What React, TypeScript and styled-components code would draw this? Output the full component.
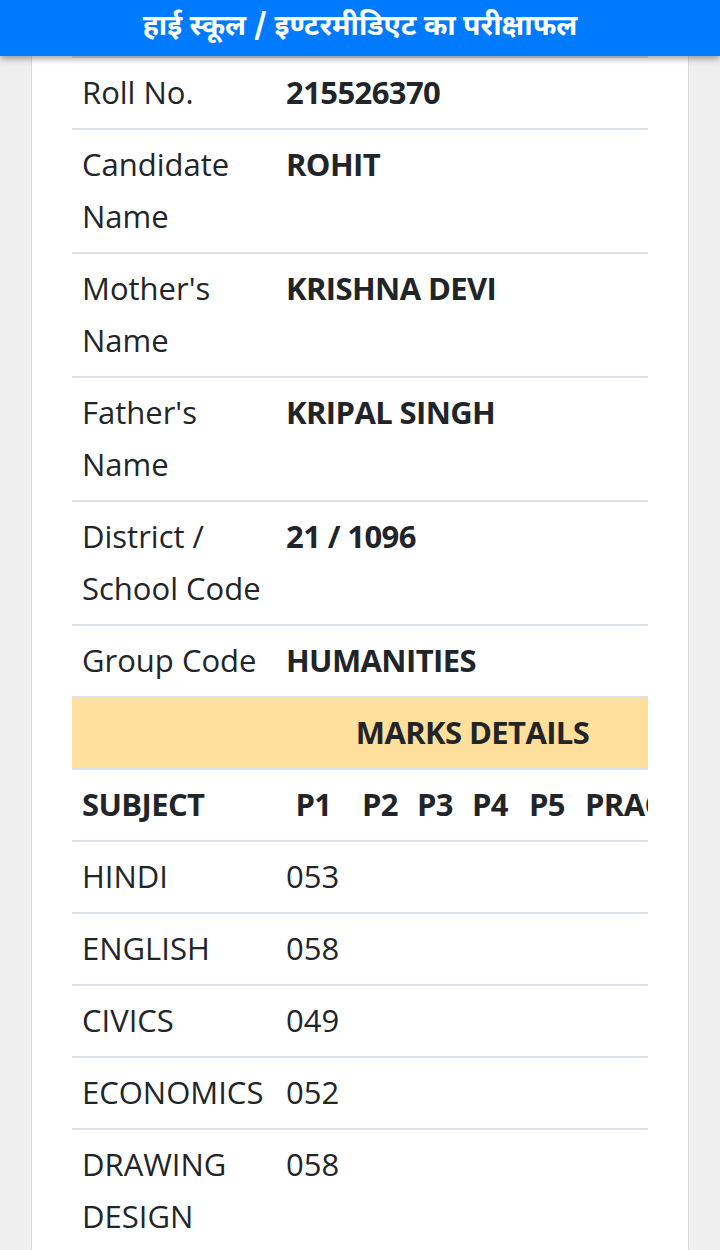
import React from "react";
import styled, { createGlobalStyle } from "styled-components";

const GlobalStyle = createGlobalStyle`
  html, body {
    margin: 0;
    padding: 0;
    background: #efefef;
  }
  body {
    font-family: "Open Sans", "Noto Sans", "Noto Sans Devanagari", sans-serif;
    color: #212529;
  }
`;

const Page = styled.div`
  width: 720px;
  min-height: 1250px;
  background: #efefef;
`;

const TopBar = styled.header`
  position: relative;
  z-index: 2;
  height: 56px;
  background: #007bff;
  box-shadow: 0 3px 6px rgba(0, 0, 0, 0.35);
  display: flex;
  align-items: center;
  justify-content: center;
`;

const Title = styled.h1`
  margin: 0;
  color: #ffffff;
  font-family: "Noto Sans Devanagari", "Noto Sans", sans-serif;
  font-size: 28.5px;
  font-weight: 700;
  line-height: 1;
  padding-top: 1px;
`;

const Card = styled.main`
  margin: 0 31px;
  background: #ffffff;
  border-left: 1px solid #d9d9d9;
  border-right: 1px solid #d9d9d9;
  padding: 0 40px;
  min-height: 1194px;
`;

const Scroller = styled.div`
  width: 576px;
  overflow: hidden;
`;

const Table = styled.table`
  width: 802px;
  table-layout: fixed;
  border-collapse: collapse;
  font-size: 31px;
  line-height: 52px;
`;

const Cell = styled.td<{ $bold?: boolean }>`
  border-top: 2px solid #dee2e6;
  padding: 8px 11px 10px 10px;
  vertical-align: top;
  font-weight: ${(p) => (p.$bold ? 700 : 400)};
  letter-spacing: ${(p) => (p.$bold ? "-0.6px" : "0")};
  text-align: left;
`;

const HeadCell = styled.th<{ $center?: boolean }>`
  border-top: 2px solid #dee2e6;
  padding: 8px 11px 10px 10px;
  font-weight: 700;
  letter-spacing: -0.6px;
  text-align: ${(p) => (p.$center ? "center" : "left")};
  white-space: nowrap;
`;

const BandRow = styled.tr`
  background: #ffdf9c;
`;

const BandCell = styled.th`
  border-top: 2px solid #dee2e6;
  padding: 8px 11px 10px 10px;
  font-weight: 700;
  letter-spacing: -0.6px;
  text-align: center;
`;

const info: [string, string][] = [
  ["Roll No.", "215526370"],
  ["Candidate Name", "ROHIT"],
  ["Mother's Name", "KRISHNA DEVI"],
  ["Father's Name", "KRIPAL SINGH"],
  ["District / School Code", "21 / 1096"],
  ["Group Code", "HUMANITIES"],
];

const marks: [string, string][] = [
  ["HINDI", "053"],
  ["ENGLISH", "058"],
  ["CIVICS", "049"],
  ["ECONOMICS", "052"],
  ["DRAWING DESIGN", "058"],
];

const colWidths = [204, 76, 55, 55, 57, 56, 299];
const papers = ["P1", "P2", "P3", "P4", "P5"];

export default function App() {
  return (
    <>
      <GlobalStyle />
      <Page>
        <TopBar>
          <Title>हाई स्कूल / इण्टरमीडिएट का परीक्षाफल</Title>
        </TopBar>
        <Card>
          <Scroller>
            <Table>
              <colgroup>
                {colWidths.map((w, i) => (
                  <col key={i} style={{ width: w }} />
                ))}
              </colgroup>
              <tbody>
                {info.map(([k, v]) => (
                  <tr key={k}>
                    <Cell>{k}</Cell>
                    <Cell $bold colSpan={6}>
                      {v}
                    </Cell>
                  </tr>
                ))}
                <BandRow>
                  <BandCell colSpan={7}>MARKS DETAILS</BandCell>
                </BandRow>
                <tr>
                  <HeadCell>SUBJECT</HeadCell>
                  {papers.map((h) => (
                    <HeadCell key={h} $center>
                      {h}
                    </HeadCell>
                  ))}
                  <HeadCell>PRAC</HeadCell>
                </tr>
                {marks.map(([s, m]) => (
                  <tr key={s}>
                    <Cell>{s}</Cell>
                    <Cell>{m}</Cell>
                    <Cell />
                    <Cell />
                    <Cell />
                    <Cell />
                    <Cell />
                  </tr>
                ))}
              </tbody>
            </Table>
          </Scroller>
        </Card>
      </Page>
    </>
  );
}
